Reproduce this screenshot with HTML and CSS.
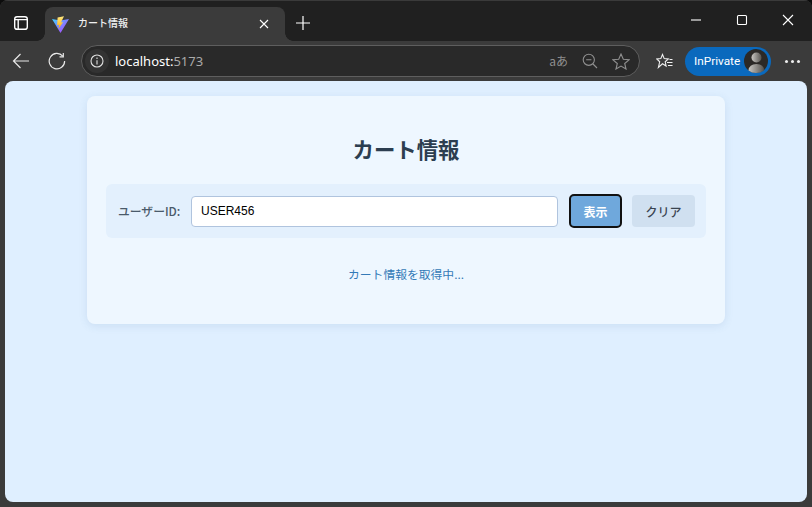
FILE: index.html
```html
<!DOCTYPE html>
<html lang="ja">
<head>
<meta charset="utf-8">
<title>カート情報</title>
<link rel="stylesheet" href="styles.css">
</head>
<body>
<div class="window">
  <header class="titlebar">
    <div class="tab-actions">
      <svg class="icon" width="16" height="16" viewBox="0 0 16 16" fill="none" stroke="#fff" stroke-width="1.4"><rect x="1.7" y="1.7" width="12.6" height="12.6" rx="2.4"/><path d="M1.7 4.6H14.3M5.2 4.6V14.3"/></svg>
    </div>
    <div class="tab">
      <svg class="favicon" width="17" height="17" viewBox="0 0 17 17"><defs><linearGradient id="vg" x1="0" y1="0" x2="1" y2="1"><stop offset="0" stop-color="#41d1ff"/><stop offset="1" stop-color="#bd34fe"/></linearGradient><linearGradient id="vy" x1="0" y1="0" x2="0" y2="1"><stop offset="0" stop-color="#ffea83"/><stop offset="1" stop-color="#ffa800"/></linearGradient></defs><path d="M0 3L8.5 4.4L17 3L8.8 16.6Q8.5 17 8.2 16.6Z" fill="url(#vg)"/><path d="M12 .2L5.6 1.4L5.1 9.2L7.2 8.7L6.5 12.8L11.2 6L8.9 6.5Z" fill="url(#vy)"/></svg>
      <span class="tab-title">カート情報</span>
      <svg class="tab-close" width="10" height="10" viewBox="0 0 10 10" stroke="#fff" stroke-width="1.1"><path d="M1 1L9 9M9 1L1 9"/></svg>
    </div>
    <svg class="newtab" width="16" height="16" viewBox="0 0 16 16" stroke="#fff" stroke-width="1.2"><path d="M8 1V15M1 8H15"/></svg>
    <div class="window-controls">
      <svg width="12" height="12" viewBox="0 0 12 12" stroke="#fff" stroke-width="1.1"><path d="M1 6H11"/></svg>
      <svg width="12" height="12" viewBox="0 0 12 12" fill="none" stroke="#fff" stroke-width="1.1"><rect x="1.5" y="1.5" width="9" height="9" rx="1"/></svg>
      <svg width="12" height="12" viewBox="0 0 12 12" stroke="#fff" stroke-width="1.1"><path d="M1 1L11 11M11 1L1 11"/></svg>
    </div>
  </header>
  <nav class="toolbar">
    <svg class="back" width="18" height="16" viewBox="0 0 18 16" fill="none" stroke="#e8e8e8" stroke-width="1.2"><path d="M17 8H1.5M8.5 1L1.5 8L8.5 15"/></svg>
    <svg class="reload" width="18" height="18" viewBox="0 0 18 18" fill="none" stroke="#e8e8e8" stroke-width="1.2"><path d="M14.8 4.2A7.7 7.7 0 1 0 16.6 9"/><path d="M15.3 1V4.8H11.5"/></svg>
    <div class="address">
      <span class="info"><svg width="14" height="14" viewBox="0 0 14 14" fill="none" stroke="#e0e0e0" stroke-width="1.1"><circle cx="7" cy="7" r="6"/><path d="M7 6.2V10.4M7 3.6V5"/></svg></span>
      <span class="url"><span class="host">localhost:</span><span class="port">5173</span></span>
      <span class="addr-icons">
        <span class="translate">aあ</span>
        <svg width="16" height="16" viewBox="0 0 16 16" fill="none" stroke="#8f8f8f" stroke-width="1.1"><circle cx="6.8" cy="6.8" r="5.6"/><path d="M4.2 6.8H9.4M11 11L15 15"/></svg>
        <svg width="18" height="17" viewBox="0 0 18 17" fill="none" stroke="#8f8f8f" stroke-width="1.1"><path d="M9 1L11.3 6.2L17 6.8L12.7 10.5L14 16L9 13.1L4 16L5.3 10.5L1 6.8L6.7 6.2Z"/></svg>
      </span>
    </div>
    <svg class="favorites" width="17" height="17" viewBox="0 0 17 17" fill="none" stroke="#f0f0f0" stroke-width="1.1"><path d="M6.5 1.5L8.2 5.6L12.3 6L9.2 8.8L10.1 13L6.5 10.8L2.4 14.5L3.7 8.8L.8 6L4.8 5.6Z"/><path d="M11 9.5H16.5M12 12.5H16.5M13.5 6.5H16.5"/></svg>
    <div class="profile">
      <span class="profile-label">InPrivate</span>
      <svg class="avatar" width="24" height="24" viewBox="0 0 24 24"><defs><linearGradient id="pg" x1="0" y1="0" x2="1" y2="0"><stop offset="0" stop-color="#c9c7c2"/><stop offset="1" stop-color="#55534f"/></linearGradient></defs><circle cx="12" cy="12" r="12" fill="#2b2926"/><circle cx="12.5" cy="8.5" r="5" fill="url(#pg)"/><path d="M4.5 21.5Q5 15 12.5 15T20 21.5Q16.5 24 12 24T4.5 21.5Z" fill="url(#pg)"/></svg>
    </div>
    <span class="more"><i></i><i></i><i></i></span>
  </nav>
  <main class="viewport">
    <section class="card">
      <h1 class="card-title">カート情報</h1>
      <form class="lookup">
        <label class="lookup-label" for="uid">ユーザーID:</label>
        <input class="lookup-input" id="uid" type="text" value="USER456">
        <button class="btn btn-primary" type="button">表示</button>
        <button class="btn btn-secondary" type="button">クリア</button>
      </form>
      <p class="status">カート情報を取得中...</p>
    </section>
  </main>
</div>
</body>
</html>
```
FILE: styles.css
```css
* { box-sizing: border-box; }
html, body { margin: 0; height: 100%; }
body {
  background: #0c0c0c;
  font-family: "Noto Sans CJK JP", "Noto Sans", sans-serif;
  overflow: hidden;
}
.window {
  width: 812px;
  height: 507px;
  display: flex;
  flex-direction: column;
  background: #3b3b3b;
  border-radius: 8px 8px 0 0;
  overflow: hidden;
}
.titlebar {
  height: 41px;
  flex: none;
  display: flex;
  align-items: flex-end;
  background: #202020;
  border-top: 1px solid #3a3a3a;
  position: relative;
}
.tab-actions {
  width: 45px;
  height: 40px;
  display: flex;
  align-items: center;
  justify-content: center;
  padding: 4px 3px 0 0;
}
.tab {
  position: relative;
  width: 240px;
  height: 34px;
  background: #3b3b3b;
  border-radius: 8px 8px 0 0;
  display: flex;
  align-items: center;
  padding: 0 16px 0 7px;
  color: #fff;
  font-size: 10px;
  font-weight: 500;
}
.tab::before,
.tab::after {
  content: "";
  position: absolute;
  bottom: 0;
  width: 8px;
  height: 8px;
}
.tab::before {
  left: -8px;
  background: radial-gradient(circle at 0 0, transparent 7.5px, #3b3b3b 8px);
}
.tab::after {
  right: -8px;
  background: radial-gradient(circle at 100% 0, transparent 7.5px, #3b3b3b 8px);
}
.favicon { flex: none; }
.tab-title { margin-left: 9px; flex: 1; color: #f0f0f0; padding-bottom: 3px; }
.tab-close { flex: none; }
.newtab { margin: 0 0 10px 10px; }
.window-controls {
  margin-left: auto;
  display: flex;
  align-items: center;
  gap: 34px;
  height: 40px;
  padding: 0 18px 2px 0;
}
.toolbar {
  height: 40px;
  flex: none;
  display: flex;
  align-items: center;
  background: #3b3b3b;
}
.back { margin-left: 12px; }
.reload { margin-left: 18px; }
.address {
  margin-left: 15px;
  width: 559px;
  height: 32px;
  border: 1px solid #5e5e5e;
  border-radius: 16px;
  background: #292929;
  display: flex;
  align-items: center;
  padding: 0 9px 0 3px;
}
.info {
  width: 24px;
  height: 24px;
  border-radius: 50%;
  background: #333;
  display: flex;
  align-items: center;
  justify-content: center;
}
.url {
  margin-left: 6px;
  padding-top: 1px;
  font: 13px "Noto Sans", sans-serif;
  line-height: 1;
}
.host { color: #fff; }
.port { color: #aaa; }
.addr-icons {
  margin-left: auto;
  display: flex;
  align-items: center;
  gap: 14px;
}
.translate { color: #8f8f8f; font-size: 12px; line-height: 1; }
.favorites { margin-left: 16px; }
.profile {
  margin-left: 12px;
  width: 86px;
  height: 29px;
  border-radius: 15px;
  background: #0a69bd;
  display: flex;
  align-items: center;
  justify-content: space-between;
  padding: 0 3px 0 9px;
  color: #fff;
  font: 11.8px Roboto, sans-serif;
}
.more {
  margin-left: 14px;
  display: flex;
  gap: 3px;
}
.more i {
  width: 3px;
  height: 3px;
  background: #eee;
  border-radius: 50%;
}
.viewport {
  flex: 1;
  margin: 0 5px 5px;
  background: #dfefff;
  border-radius: 8px;
  padding-top: 15px;
}
.card {
  width: 638px;
  height: 228px;
  margin: 0 auto;
  padding: 37px 19px 0;
  background: #eef7ff;
  border-radius: 8px;
  box-shadow: 0 2px 8px rgba(60, 110, 160, 0.12);
}
.card-title {
  margin: 0;
  text-align: center;
  font-size: 21.4px;
  line-height: 32px;
  font-weight: 700;
  color: #2c3e50;
}
.lookup {
  margin-top: 19px;
  height: 54px;
  background: #e3f0fd;
  border-radius: 6px;
  display: flex;
  align-items: center;
  padding: 0 11px 0 12px;
}
.lookup-label {
  font-size: 11.8px;
  font-weight: 500;
  color: #4a5a6a;
  white-space: nowrap;
  width: 73px;
  padding-bottom: 1px;
}
.lookup-input {
  width: 367px;
  height: 31px;
  border: 1px solid #b0c4de;
  border-radius: 4px;
  background: #fff;
  padding: 0 9px;
  font: 12px "Liberation Sans", sans-serif;
  color: #000;
  outline: none;
}
.btn {
  border: 0;
  border-radius: 4px;
  font-family: inherit;
  font-size: 12px;
  font-weight: 500;
  padding: 0;
}
.btn-primary {
  margin-left: 11px;
  width: 53px;
  height: 34px;
  background: #6fa8dc;
  color: #fff;
  font-weight: 700;
  border: 2px solid #111;
  border-radius: 5px;
}
.btn-secondary {
  margin-left: 10px;
  width: 63px;
  height: 32px;
  background: #d0e0f0;
  color: #3a4450;
}
.status {
  margin: 26px 0 0;
  text-align: center;
  font-size: 11.8px;
  line-height: 20px;
  color: #337ab7;
}
```
